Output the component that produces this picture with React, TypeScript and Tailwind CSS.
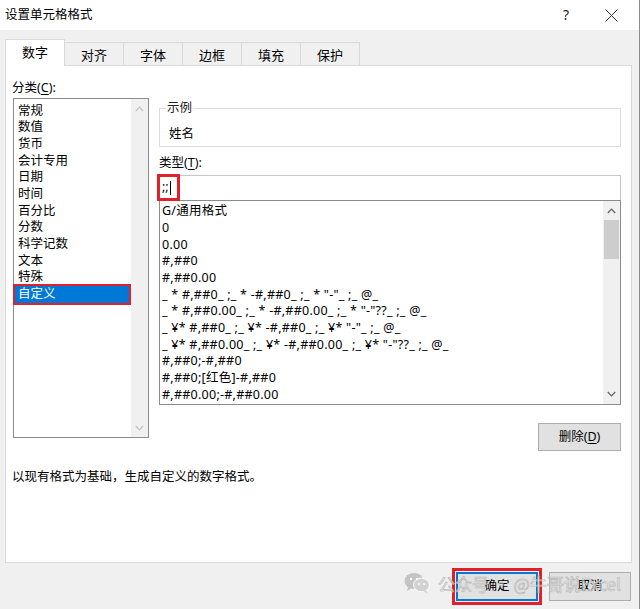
import React from "react";

const FONT = "font-['Segoe_UI','Noto_Sans','Noto_Sans_CJK_SC',sans-serif]";

const categories = ["常规", "数值", "货币", "会计专用", "日期", "时间", "百分比", "分数", "科学记数", "文本", "特殊", "自定义"];

const formats = [
  "G/通用格式",
  "0",
  "0.00",
  "#,##0",
  "#,##0.00",
  '_ * #,##0_ ;_ * -#,##0_ ;_ * "-"_ ;_ @_',
  '_ * #,##0.00_ ;_ * -#,##0.00_ ;_ * "-"??_ ;_ @_',
  '_ ¥* #,##0_ ;_ ¥* -#,##0_ ;_ ¥* "-"_ ;_ @_',
  '_ ¥* #,##0.00_ ;_ ¥* -#,##0.00_ ;_ ¥* "-"??_ ;_ @_',
  "#,##0;-#,##0",
  "#,##0;[红色]-#,##0",
  "#,##0.00;-#,##0.00",
];

const tabs = ["数字", "对齐", "字体", "边框", "填充", "保护"];

function ChevUp({ color }: { color: string }) {
  return (
    <svg width="9" height="6" viewBox="0 0 9 6">
      <path d="M0.8 5 L4.5 1.2 L8.2 5" fill="none" stroke={color} strokeWidth="1.2" />
    </svg>
  );
}
function ChevDown({ color }: { color: string }) {
  return (
    <svg width="9" height="6" viewBox="0 0 9 6">
      <path d="M0.8 1 L4.5 4.8 L8.2 1" fill="none" stroke={color} strokeWidth="1.2" />
    </svg>
  );
}

function WeChat() {
  return (
    <svg width="26" height="22" viewBox="0 0 26 22">
      <ellipse cx="10" cy="9" rx="9.5" ry="8" fill="#c4c4c4" />
      <path d="M4 15 L3 19 L8 16 Z" fill="#c4c4c4" />
      <ellipse cx="17.5" cy="13" rx="8" ry="6.8" fill="#d2d2d2" stroke="#fff" strokeWidth="1" />
      <path d="M22 18 L23.5 21.5 L19 19 Z" fill="#d2d2d2" />
      <circle cx="7" cy="7" r="1.2" fill="#fff" />
      <circle cx="13" cy="7" r="1.2" fill="#fff" />
      <circle cx="15" cy="12" r="1" fill="#fff" />
      <circle cx="20" cy="12" r="1" fill="#fff" />
    </svg>
  );
}

export default function App() {
  return (
    <div className={`${FONT} relative w-[640px] h-[609px] bg-[#f0f0f0] border-r border-[#8c8c8c] text-[12.5px] text-[#000] overflow-hidden`}>
      {/* title bar */}
      <div className="h-[30px] bg-white flex items-center pl-[5px]">
        <span className="text-[12.5px] leading-none">设置单元格格式</span>
        <span className="ml-auto mr-[36px] text-[14px] text-[#222] leading-none">?</span>
        <svg width="13" height="13" viewBox="0 0 13 13" className="mr-[21px]">
          <path d="M0.5 0.5 L12.5 12.5 M12.5 0.5 L0.5 12.5" stroke="#333" strokeWidth="1" />
        </svg>
      </div>

      {/* tabs */}
      <div className="h-[35px] flex items-end pl-[5px]">
        {tabs.map((t, i) =>
          i === 0 ? (
            <div
              key={t}
              className="relative z-10 w-[60px] h-[27px] mb-[-1px] bg-white border border-b-0 border-[#d9d9d9] flex items-center justify-center pb-[1px] text-[13px]"
            >
              {t}
            </div>
          ) : (
            <div
              key={t}
              className="w-[60px] h-[23px] ml-[-1px] bg-[#f0f0f0] border border-b-0 border-[#d9d9d9] flex items-center justify-center pt-[3px] text-[13px]"
            >
              {t}
            </div>
          )
        )}
      </div>

      {/* panel */}
      <div className="ml-[5px] w-[627px] h-[498px] bg-white border border-[#d9d9d9] pl-[6px] pr-[8px]">
        <div className="flex items-start">
          {/* left column */}
          <div className="mt-[13px] w-[143px]">
            <div className="h-[17px] leading-[17px]">
              分类(<span className="underline underline-offset-2">C</span>):
            </div>
            <div className="mt-[2px] ml-[1px] w-[136px] h-[340px] border border-[#8c8c8c] flex">
              <div className="flex-1 pt-[3.5px] pl-[1px]">
                {categories.map((c, i) =>
                  i === categories.length - 1 ? (
                    <div
                      key={c}
                      className="h-[16.7px] leading-[16.7px] w-[114px] pl-[3px] bg-[#0078d7] text-white outline-[2.5px] outline-solid outline-[#e0212c]"
                    >
                      {c}
                    </div>
                  ) : (
                    <div key={c} className="h-[16.7px] leading-[16.7px] pl-[3px]">
                      {c}
                    </div>
                  )
                )}
              </div>
              <div className="w-[17px] bg-[#f0f0f0] flex flex-col items-center justify-between pt-[7px] pb-[6px]">
                <ChevUp color="#c2c2c2" />
                <ChevDown color="#c2c2c2" />
              </div>
            </div>
          </div>

          {/* right column */}
          <div className="ml-[4px] mt-[34px] w-[462px]">
            <fieldset className="h-[47px] border border-[#dcdcdc] pl-[6px]">
              <legend className="ml-0 px-[1px] leading-[16px] text-[#222]">示例</legend>
              <div className="pl-[3px] pt-[9px] leading-[17px]">姓名</div>
            </fieldset>
            <div className="mt-[8px] h-[16px] leading-[16px]">
              类型(<span className="underline underline-offset-2">T</span>):
            </div>
            <div className="mt-[4px] h-[25px] border border-b-0 border-[#c8c8c8] flex items-start">
              <span className="mt-[1px] ml-0 h-[21px] w-[17px] flex items-center pl-[2px] outline-[3px] outline-solid outline-[#e0212c]">
                <span className="leading-none">;;</span>
                <span className="ml-[1px] w-[1px] h-[14px] bg-black" />
              </span>
            </div>
            <div className="h-[205px] border border-[#8c8c8c] flex">
              <div className="flex-1 pt-[2.3px] pl-[2px] whitespace-pre tracking-[0.25px]">
                {formats.map((f) => (
                  <div key={f} className="h-[16.7px] leading-[16.7px]">
                    {f}
                  </div>
                ))}
              </div>
              <div className="w-[17px] bg-[#f0f0f0] flex flex-col items-center">
                <div className="h-[19px] flex items-center justify-center">
                  <ChevUp color="#606060" />
                </div>
                <div className="w-[15px] h-[39px] bg-[#cdcdcd]" />
                <div className="mt-auto h-[20px] flex items-center justify-center">
                  <ChevDown color="#606060" />
                </div>
              </div>
            </div>
            <div className="flex justify-end mt-[18px]">
              <div className="w-[83px] h-[28px] bg-[#e1e1e1] border border-[#adadad] flex items-center justify-center">
                删除(<span className="underline underline-offset-2">D</span>)
              </div>
            </div>
          </div>
        </div>
        <div className="mt-[17px] h-[17px] leading-[17px]">以现有格式为基础，生成自定义的数字格式。</div>
      </div>

      {/* bottom buttons */}
      <div className="flex justify-end gap-[11px] pt-[9px] pr-[8px]">
        <div className="w-[82px] h-[29px] bg-[#e1e1e1] border-2 border-[#0078d7] flex items-center justify-center outline-[3px] outline-solid outline-offset-[1px] outline-[#e0212c]">
          确定
        </div>
        <div className="w-[82px] h-[29px] bg-[#e1e1e1] border border-[#adadad] flex items-center justify-center">
          取消
        </div>
      </div>

      {/* watermark */}
      <div className="absolute left-[404px] top-[572px] flex items-center gap-[8px] pointer-events-none">
        <WeChat />
        <span className="text-[17px] leading-none text-white/40 [-webkit-text-stroke:0.7px_#b8b8b8] font-['Noto_Sans_CJK_SC',sans-serif]">
          公众号 · @牛哥说Excel
        </span>
      </div>
    </div>
  );
}
